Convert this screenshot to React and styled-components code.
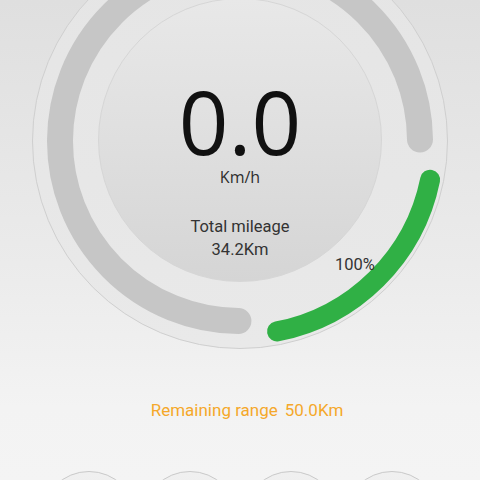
import React from "react";
import styled, { createGlobalStyle } from "styled-components";

const Global = createGlobalStyle`
  html, body { margin: 0; padding: 0; }
  body {
    width: 480px;
    height: 480px;
    overflow: hidden;
    background: linear-gradient(180deg, #dfdfdf 0%, #ebebeb 55%, #f3f3f3 85%, #f4f4f4 100%);
    font-family: Roboto, "Liberation Sans", sans-serif;
  }
`;

const Page = styled.div`
  width: 480px;
  height: 480px;
  display: flex;
  flex-direction: column;
  align-items: center;
  overflow: hidden;
`;

const Gauge = styled.div`
  position: relative;
  flex: none;
  width: 416px;
  height: 416px;
  margin-top: -67px;
  box-sizing: border-box;
  border-radius: 50%;
  border: 1px solid #cfcfcf;
  background: linear-gradient(180deg, #e5e5e5 0%, #e7e7e7 60%, #e9e9e9 100%);
  display: flex;
  align-items: center;
  justify-content: center;
`;

const Arcs = styled.svg`
  position: absolute;
  left: -1px;
  top: -1px;
  width: 416px;
  height: 416px;
  pointer-events: none;
`;

const Dial = styled.div`
  width: 284px;
  height: 284px;
  box-sizing: border-box;
  margin-top: -2px;
  border-radius: 50%;
  border: 1px solid #d6d6d6;
  background: linear-gradient(180deg, #e8e8e8 0%, #dfdfdf 50%, #d5d5d5 100%);
  display: flex;
  flex-direction: column;
  align-items: center;
  padding-top: 82px;
`;

const Speed = styled.div`
  font-family: "Open Sans", "Noto Sans", sans-serif;
  font-size: 87px;
  line-height: 80px;
  color: #111;
`;

const Unit = styled.div`
  font-family: "Open Sans", "Noto Sans", sans-serif;
  font-size: 16px;
  line-height: 20px;
  margin-top: 6px;
  color: #2e2e2e;
`;

const Label = styled.div`
  font-family: Roboto, "Liberation Sans", sans-serif;
  font-size: 16.5px;
  line-height: 20px;
  color: #333;
  margin-top: ${(p) => p.$gap}px;
`;

const Percent = styled.div`
  position: absolute;
  left: 302px;
  top: 321px;
  font-family: Roboto, "Liberation Sans", sans-serif;
  font-size: 16.5px;
  line-height: 20px;
  color: #333;
`;

const Range = styled.div`
  margin-top: 51px;
  padding-left: 14px;
  font-family: Roboto, "Liberation Sans", sans-serif;
  font-size: 17px;
  line-height: 20px;
  color: #f5a82a;
  display: flex;
  gap: 7px;
`;

const Buttons = styled.div`
  margin-top: 51px;
  display: flex;
  gap: 5px;
`;

const RoundButton = styled.button`
  width: 96px;
  height: 96px;
  flex: none;
  border-radius: 50%;
  border: 1.5px solid #c9c9c9;
  background: linear-gradient(180deg, #f0f0f0 0%, #e8e8e8 100%);
  padding: 0;
`;

const C = 208;
const pt = (r, deg) => {
  const a = (deg * Math.PI) / 180;
  return [C + r * Math.cos(a), C + r * Math.sin(a)];
};
const arc = (r, a0, a1, large) => {
  const [x0, y0] = pt(r, a0);
  const [x1, y1] = pt(r, a1);
  return `M ${x0.toFixed(2)} ${y0.toFixed(2)} A ${r} ${r} 0 ${large} 1 ${x1.toFixed(2)} ${y1.toFixed(2)}`;
};

export default function App() {
  return (
    <Page>
      <Global />
      <Gauge>
        <Dial>
          <Speed>0.0</Speed>
          <Unit>Km/h</Unit>
          <Label $gap={30}>Total mileage</Label>
          <Label $gap={3}>34.2Km</Label>
        </Dial>
        <Arcs viewBox="0 0 416 416">
          <path
            d={arc(180, 90.5, 359.5, 1)}
            fill="none"
            stroke="#c6c6c6"
            strokeWidth="26"
            strokeLinecap="round"
          />
          <path
            d={arc(194, 11.5, 79, 0)}
            fill="none"
            stroke="#30b045"
            strokeWidth="20"
            strokeLinecap="round"
          />
        </Arcs>
        <Percent>100%</Percent>
      </Gauge>
      <Range>
        <span>Remaining range</span>
        <span>50.0Km</span>
      </Range>
      <Buttons>
        <RoundButton aria-label="button 1" />
        <RoundButton aria-label="button 2" />
        <RoundButton aria-label="button 3" />
        <RoundButton aria-label="button 4" />
      </Buttons>
    </Page>
  );
}
